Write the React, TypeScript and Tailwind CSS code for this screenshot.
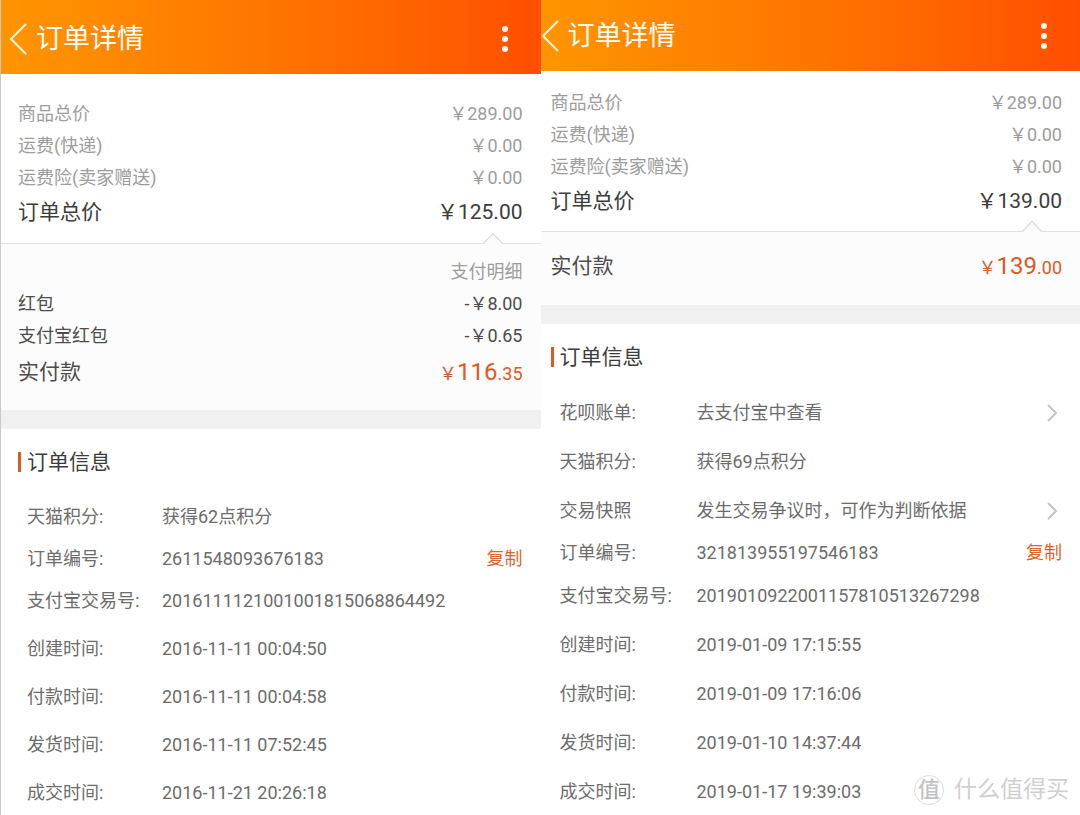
import React from "react";
import clsx from "clsx";

type Price = { label: string; value: string };
type Info = { label: string; value: string; action?: "copy" | "open" };
type Order = {
  compact: boolean;
  prices: Price[];
  total: string;
  discounts: Price[];
  paid: [string, string];
  info: Info[];
};

const orders: Order[] = [
  {
    compact: false,
    prices: [
      { label: "商品总价", value: "¥289.00" },
      { label: "运费(快递)", value: "¥0.00" },
      { label: "运费险(卖家赠送)", value: "¥0.00" },
    ],
    total: "¥125.00",
    discounts: [
      { label: "红包", value: "-¥8.00" },
      { label: "支付宝红包", value: "-¥0.65" },
    ],
    paid: ["116", ".35"],
    info: [
      { label: "天猫积分:", value: "获得62点积分" },
      { label: "订单编号:", value: "2611548093676183", action: "copy" },
      { label: "支付宝交易号:", value: "2016111121001001815068864492" },
      { label: "创建时间:", value: "2016-11-11 00:04:50" },
      { label: "付款时间:", value: "2016-11-11 00:04:58" },
      { label: "发货时间:", value: "2016-11-11 07:52:45" },
      { label: "成交时间:", value: "2016-11-21 20:26:18" },
    ],
  },
  {
    compact: true,
    prices: [
      { label: "商品总价", value: "¥289.00" },
      { label: "运费(快递)", value: "¥0.00" },
      { label: "运费险(卖家赠送)", value: "¥0.00" },
    ],
    total: "¥139.00",
    discounts: [],
    paid: ["139", ".00"],
    info: [
      { label: "花呗账单:", value: "去支付宝中查看", action: "open" },
      { label: "天猫积分:", value: "获得69点积分" },
      { label: "交易快照", value: "发生交易争议时，可作为判断依据", action: "open" },
      { label: "订单编号:", value: "321813955197546183", action: "copy" },
      { label: "支付宝交易号:", value: "2019010922001157810513267298" },
      { label: "创建时间:", value: "2019-01-09 17:15:55" },
      { label: "付款时间:", value: "2019-01-09 17:16:06" },
      { label: "发货时间:", value: "2019-01-10 14:37:44" },
      { label: "成交时间:", value: "2019-01-17 19:39:03" },
    ],
  },
];

/* Shows the yen sign in its full-width form, followed by the digits. */
function Money({ value }: { value: string }) {
  return <>{value.replace("¥", "￥")}</>;
}

function PriceRow({ label, value }: Price) {
  return (
    <div className="flex h-8 items-center justify-between">
      <dt>{label}</dt>
      <dd><Money value={value} /></dd>
    </div>
  );
}

function OrderPanel({ order }: { order: Order }) {
  const { compact } = order;
  const side = compact ? "pl-[10px] pr-[18px]" : "pl-[17px] pr-[18px]";
  return (
    <section className={clsx("min-w-0 flex-1 bg-white", compact ? "" : "border-l border-[#c9c9c9]")}>
      <header
        className={clsx(
          "flex items-center justify-between bg-linear-to-r from-[#ff9500] to-[#ff4e00] pr-7 text-white",
          compact ? "h-[71px]" : "h-[74px] pl-2 pt-1",
        )}
      >
        <div className="flex items-center gap-2">
          <button type="button" aria-label="返回">
            <svg width="19" height="34" viewBox="0 0 19 34" fill="none" stroke="#fff6dc" strokeWidth="2">
              <path d="M17 2 2 17l15 15" />
            </svg>
          </button>
          <h1 className="text-[27px] leading-9">订单详情</h1>
        </div>
        <button type="button" aria-label="更多" className="px-1">
          <svg width="8" height="28" viewBox="0 0 8 28" fill="#fffaf0">
            <circle cx="4" cy="4" r="3" />
            <circle cx="4" cy="14" r="3" />
            <circle cx="4" cy="24" r="3" />
          </svg>
        </button>
      </header>

      <dl className={clsx("relative border-b border-[#e2e2e2] text-[#9c9c9c]", side, compact ? "pb-3 pt-4" : "pb-[13px] pt-6")}>
        {order.prices.map((p) => (
          <PriceRow key={p.label} {...p} />
        ))}
        <div className="flex h-9 items-center justify-between text-[21px] text-[#3c3c3c]">
          <dt>订单总价</dt>
          <dd><Money value={order.total} /></dd>
        </div>
        <svg className="absolute -bottom-px right-[37px]" width="22" height="12" viewBox="0 0 22 12">
          <path d="M1 12 11 1.5 21 12" fill="#fcfcfc" stroke="#dcdcdc" strokeWidth="1.3" />
        </svg>
      </dl>

      <div className={clsx("bg-[#fcfcfc] text-[#4c4c4c]", side, compact ? "pb-[19px] pt-[14px]" : "pb-[18px] pt-3")}>
        {order.discounts.length > 0 && (
          <h2 className="flex h-8 items-center justify-end text-[#9c9c9c]">支付明细</h2>
        )}
        <dl>
          {order.discounts.map((p) => (
            <PriceRow key={p.label} {...p} />
          ))}
          <div className="flex h-10 items-center justify-between">
            <dt className="text-[21px]">实付款</dt>
            <dd className="text-[#dc5a1e]">
              ￥<span className="text-2xl">{order.paid[0]}</span>
              {order.paid[1]}
            </dd>
          </div>
        </dl>
      </div>

      <div className="h-[19px] bg-[#f0f0f0]" />

      <div className={clsx("text-[#6c6c6c]", side)}>
        <h2 className="flex items-center gap-[6px] pb-[14px] pt-4 text-[21px] leading-[34px] text-[#3c3c3c]">
          <span className="h-5 w-[3px] bg-[#dc5a1e]" />
          订单信息
        </h2>
        <dl className="pl-[9px]">
          {order.info.map((row) => (
            <div
              key={row.label}
              className={clsx(
                "flex items-center",
                row.action === "copy" ? "h-9" : compact ? "h-[49px]" : "h-12",
              )}
            >
              <dt className={clsx("shrink-0", compact ? "w-[137px]" : "w-[135px]")}>{row.label}</dt>
              <dd className="flex flex-1 items-center justify-between whitespace-nowrap">
                {row.value}
                {row.action === "copy" && (
                  <button type="button" className="text-[#dc6428]">复制</button>
                )}
                {row.action === "open" && (
                  <button type="button" aria-label={row.label} className="pr-1">
                    <svg width="12" height="18" viewBox="0 0 12 18" fill="none" stroke="#c4c4c4" strokeWidth="2">
                      <path d="M2 1l8 8-8 8" />
                    </svg>
                  </button>
                )}
              </dd>
            </div>
          ))}
        </dl>
      </div>
    </section>
  );
}

export default function App() {
  return (
    <main className="relative flex min-h-screen overflow-hidden bg-white font-[Roboto,'Noto_Sans_CJK_SC',sans-serif] text-[18px] leading-6">
      {orders.map((order) => (
        <OrderPanel key={order.total} order={order} />
      ))}
      <div className="absolute bottom-3 right-[11px] flex items-center gap-[10px] text-[23px] text-[#cfcfcf]">
        <span className="flex size-[30px] items-center justify-center rounded-full border border-[#dcdcdc] text-[22px] font-medium text-[#c2c2c2]">
          值
        </span>
        <span>什么值得买</span>
      </div>
    </main>
  );
}
